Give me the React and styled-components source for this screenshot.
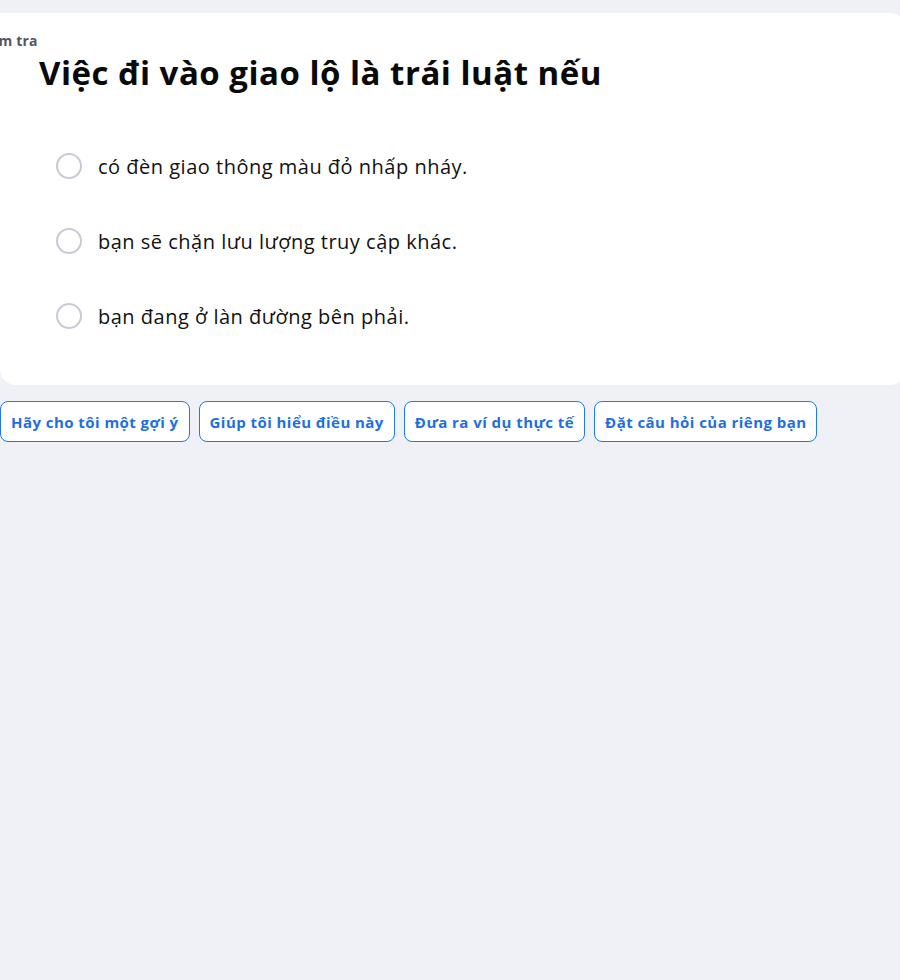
import React from 'react'
import styled, { createGlobalStyle } from 'styled-components'

const GlobalStyle = createGlobalStyle`
  html, body {
    margin: 0;
    padding: 0;
    background: #f0f1f6;
    font-family: "Open Sans", "Liberation Sans", sans-serif;
    overflow: hidden;
  }
`

const Page = styled.div`
  padding-top: 13px;
  width: 900px;
  min-height: 980px;
  box-sizing: border-box;
`

const Card = styled.div`
  background: #fff;
  width: 906px;
  height: 372px;
  box-sizing: border-box;
  border-radius: 0 16px 16px 16px;
  padding: 20px 0 0 39px;
  display: flex;
  flex-direction: column;
`

const Label = styled.div`
  margin-left: -63px;
  font-size: 14px;
  font-weight: 700;
  color: #55555f;
  line-height: 16px;
  letter-spacing: 0.2px;
`

const Title = styled.h1`
  margin: 2px 0 0;
  font-size: 33px;
  line-height: 44px;
  font-weight: 700;
  letter-spacing: 0.5px;
  color: #0a0a0a;
`

const Options = styled.div`
  margin-top: 58px;
  margin-left: 17px;
  display: flex;
  flex-direction: column;
  gap: 49px;
`

const Option = styled.label`
  display: flex;
  align-items: center;
  gap: 16px;
  height: 26px;
  font-size: 20px;
  letter-spacing: 0.5px;
  color: #111;
  cursor: pointer;
`

const Radio = styled.span`
  width: 26px;
  height: 26px;
  box-sizing: border-box;
  border: 2px solid #c9c9d6;
  border-radius: 50%;
  flex: none;
`

const Actions = styled.div`
  display: flex;
  gap: 9px;
  margin-top: 16px;
`

const Chip = styled.button`
  height: 41px;
  padding: 0 10px;
  background: #fff;
  border: 1px solid #1f78e6;
  border-radius: 8px;
  color: #1f6fe0;
  font-family: inherit;
  font-size: 15px;
  font-weight: 700;
  letter-spacing: 0.45px;
  cursor: pointer;
`

const options = [
  'có đèn giao thông màu đỏ nhấp nháy.',
  'bạn sẽ chặn lưu lượng truy cập khác.',
  'bạn đang ở làn đường bên phải.',
]

const prompts = [
  'Hãy cho tôi một gợi ý',
  'Giúp tôi hiểu điều này',
  'Đưa ra ví dụ thực tế',
  'Đặt câu hỏi của riêng bạn',
]

export default function App() {
  return (
    <Page>
      <GlobalStyle />
      <Card>
        <Label>Kiểm tra</Label>
        <Title>Việc đi vào giao lộ là trái luật nếu</Title>
        <Options>
          {options.map((o) => (
            <Option key={o}>
              <Radio />
              {o}
            </Option>
          ))}
        </Options>
      </Card>
      <Actions>
        {prompts.map((p) => (
          <Chip key={p}>{p}</Chip>
        ))}
      </Actions>
    </Page>
  )
}
